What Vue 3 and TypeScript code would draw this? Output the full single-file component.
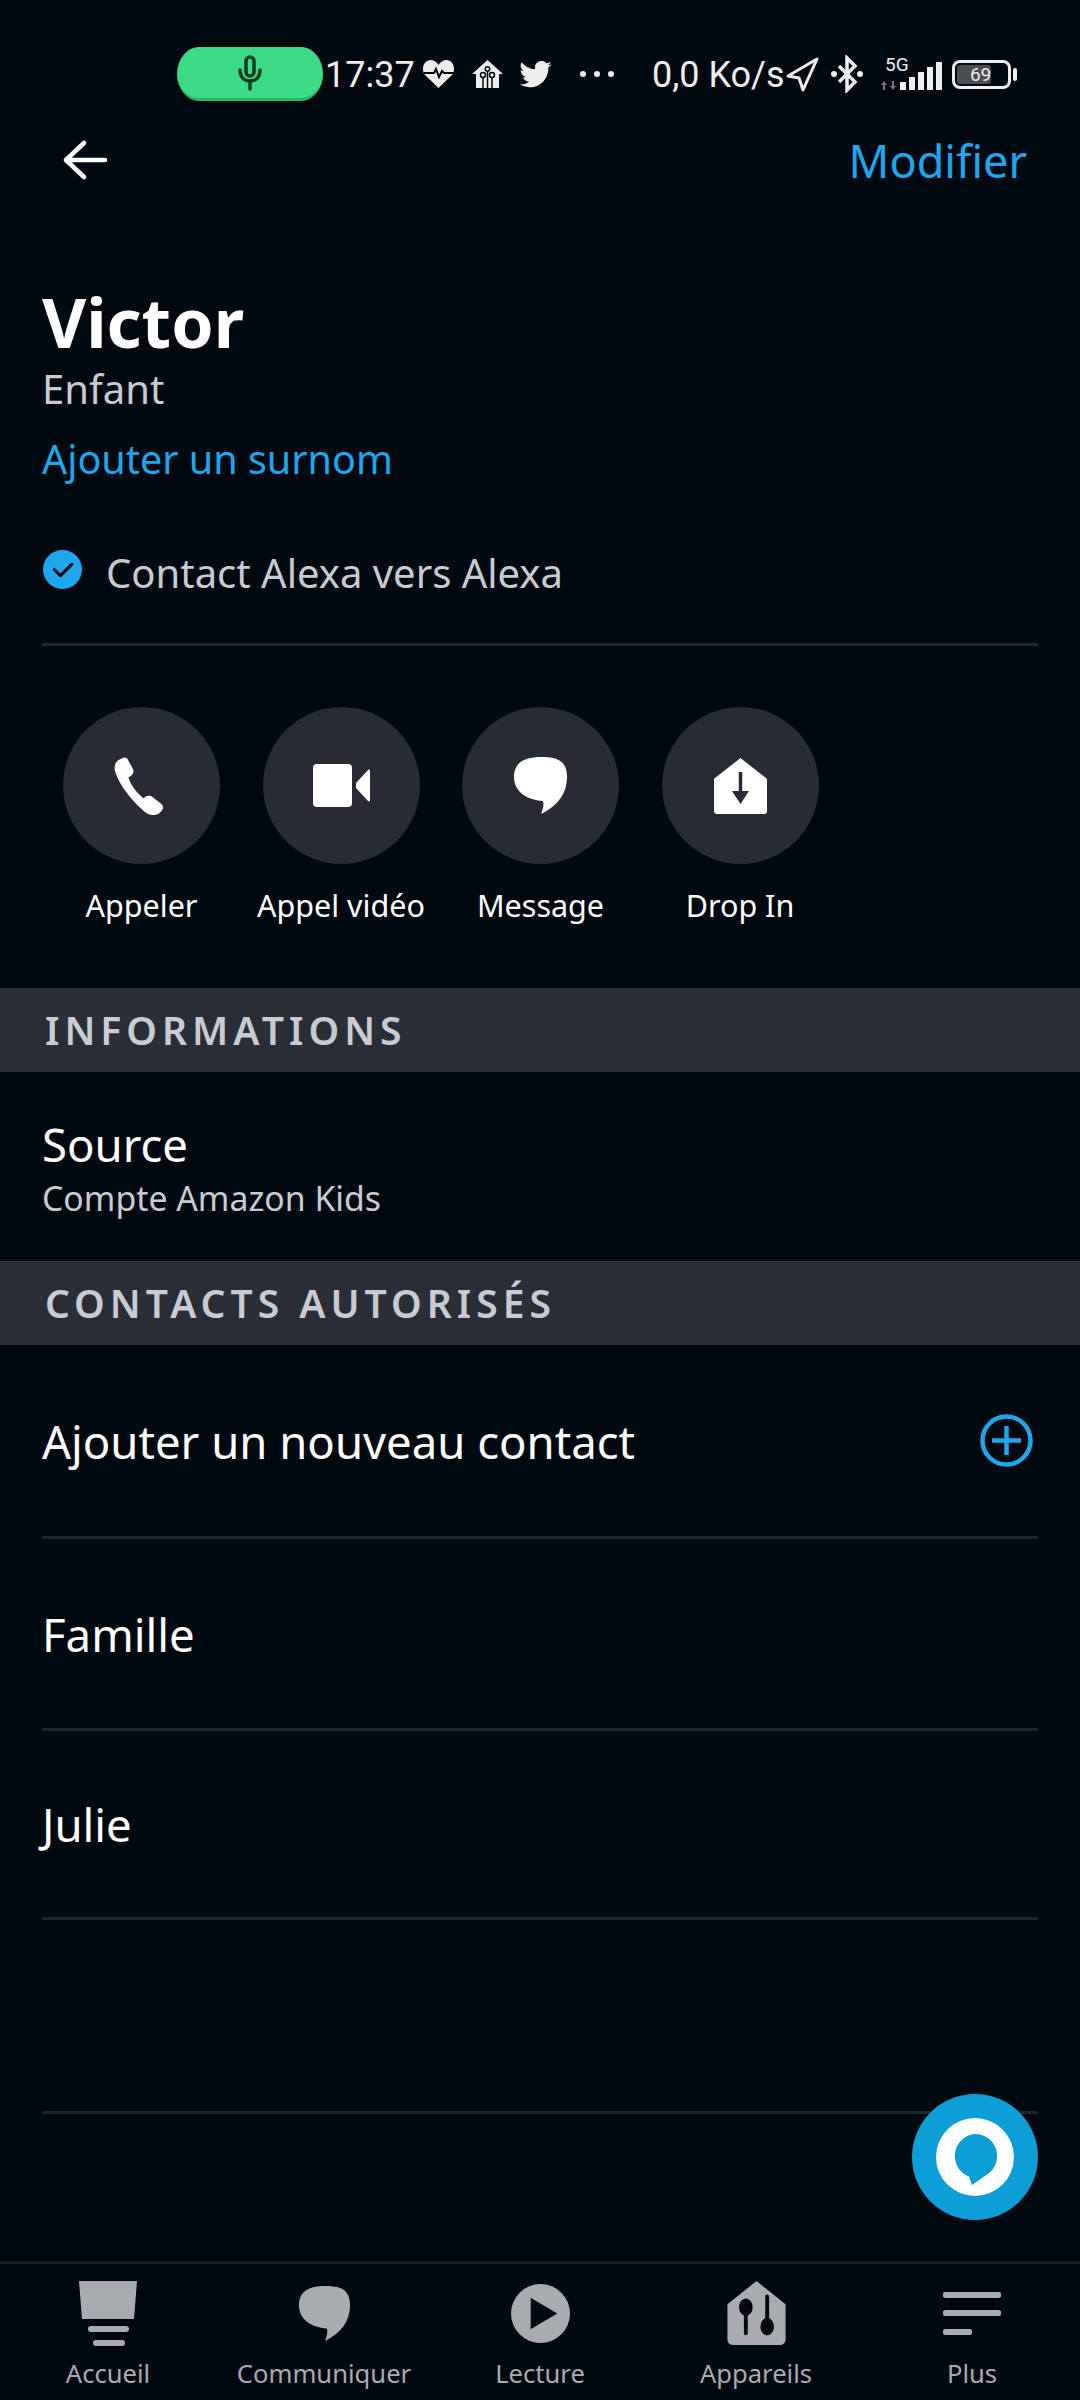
<script setup lang="ts">
const actions = [
  { id: "call", label: "Appeler" },
  { id: "video", label: "Appel vidéo" },
  { id: "msg", label: "Message" },
  { id: "drop", label: "Drop In" }
]
const tabs = ["Accueil", "Communiquer", "Lecture", "Appareils", "Plus"]
</script>

<template>
  <div class="screen">
    <div class="status">
      <div class="pill">
        <svg width="26" height="36" viewBox="0 0 26 36" fill="none" stroke="#0c3a22" stroke-width="3.5" stroke-linecap="round">
          <rect x="9" y="2" width="8" height="19" rx="4" />
          <path d="M3 15c0 7 4 11 10 11s10-4 10-11M13 26v8" />
        </svg>
      </div>
      <span class="time">17:37</span>
      <svg class="si heart" width="33" height="30" viewBox="0 0 33 30">
        <path d="M16.500 29 3 16C-1 11 1 2 8 1c4 0 7 2 8.500 5C18 3 21 1 25 1c7 1 9 10 5 15Z" fill="#eee" />
        <path d="M2 14h10l2-4 3 8 3-6 2 2h10" fill="none" stroke="#010910" stroke-width="2" />
      </svg>
      <svg class="si home" width="31" height="28" viewBox="0 0 31 28">
        <path d="M15.500 0 31 14h-4v14H4V14H0Z" fill="#eee" />
        <circle cx="11" cy="15" r="2.500" fill="none" stroke="#010910" stroke-width="1.500" />
        <circle cx="20" cy="15" r="2.500" fill="none" stroke="#010910" stroke-width="1.500" />
        <circle cx="15.500" cy="9" r="2.200" fill="none" stroke="#010910" stroke-width="1.500" />
        <path d="M11 18v10M20 18v10M15.500 11v17" stroke="#010910" stroke-width="1.500" />
      </svg>
      <svg class="si bird" width="33" height="27" viewBox="0 0 24 20">
        <path d="M24 2.400a10 10 0 0 1-2.800.8A5 5 0 0 0 23.300.5a10 10 0 0 1-3.100 1.200 4.900 4.900 0 0 0-8.400 4.500A14 14 0 0 1 1.700.9a4.900 4.900 0 0 0 1.500 6.600 5 5 0 0 1-2.200-.6c0 2.400 1.700 4.400 3.900 4.900a5 5 0 0 1-2.200.1 4.900 4.900 0 0 0 4.600 3.400A9.900 9.900 0 0 1 0 17.300 14 14 0 0 0 7.500 19.500c9.100 0 14.300-7.700 14-14.600A10 10 0 0 0 24 2.400Z" fill="#eee" />
      </svg>
      <span class="dots"><i></i><i></i><i></i></span>
      <span class="speed">0,0 Ko/s</span>
      <svg class="si nav" width="33" height="35" viewBox="0 0 33 35" fill="none" stroke="#eee" stroke-width="3" stroke-linejoin="round">
        <path d="M31 2 2 19l11 2 4 12Z" />
      </svg>
      <svg class="si bt" width="34" height="38" viewBox="0 0 34 38" fill="none" stroke="#eee" stroke-width="3.500">
        <path d="m9 11 16 16-8 8V3l8 8L9 27" />
        <circle cx="4" cy="19" r="3" fill="#eee" stroke="none" /><circle cx="30" cy="19" r="3" fill="#eee" stroke="none" />
      </svg>
      <div class="signal">
        <span class="fiveg">5G</span>
        <span class="data">
          <svg width="15" height="9" viewBox="0 0 15 9" fill="#777"><path d="M0 4 3 0l3 4H4v5H2V4ZM9 5h2V0h2v5h2l-3 4Z" /></svg>
        </span>
        <span class="bars"><i style="height: 8px"></i><i style="height: 13px"></i><i style="height: 18px"></i><i style="height: 23px"></i><i style="height: 28px"></i></span>
      </div>
      <div class="battery"><span class="cell"><span class="level">69</span></span><i class="nub"></i></div>
    </div>

    <div class="topbar">
      <svg width="46" height="40" viewBox="0 0 46 40" fill="none" stroke="#fff" stroke-width="4.500" stroke-linecap="round" stroke-linejoin="round">
        <path d="M22 3 4 20l18 17M4 20h39" />
      </svg>
      <span class="edit">Modifier</span>
    </div>

    <div class="profile">
      <h1>Victor</h1>
      <div class="role">Enfant</div>
      <div class="nick">Ajouter un surnom</div>
      <div class="verified">
        <svg width="39" height="39" viewBox="0 0 38 38">
          <circle cx="19" cy="19" r="19" fill="#1ea7ec" />
          <path d="m11 19 6 6 11-11" fill="none" stroke="#010910" stroke-width="3" stroke-linecap="round" stroke-linejoin="round" />
        </svg>
        <span>Contact Alexa vers Alexa</span>
      </div>
    </div>
    <div class="rule top-rule"></div>

    <div class="actions">
      <div v-for="a in actions" :key="a.id" class="action">
        <div class="circle">
          <svg v-if="a.id === 'call'" width="59" height="58" viewBox="0 0 60 62">
            <path d="M10 1c3-1 5 0 6 3l5 9c1 3 0 5-2 7l-3 2c2 7 9 17 16 22l3-2c2-1 5-1 7 1l9 7c2 2 3 4 1 7l-3 3c-3 2-8 3-12 1C24 52 7 32 2 16 0 11 2 5 6 3Z" fill="#fff" />
          </svg>
          <svg v-else-if="a.id === 'video'" width="57" height="43" viewBox="0 0 57 43">
            <rect x="0" y="0" width="39" height="43" rx="4" fill="#fff" />
            <path d="M43 19 55 6c1-1 2 0 2 1v29c0 1-1 2-2 1L43 24Z" fill="#fff" />
          </svg>
          <svg v-else-if="a.id === 'msg'" width="53" height="57" viewBox="0 0 53 57">
            <path d="M27 0C44 0 53 4 53 20 53 36 44 49 27 57 29 52 30 48 29 44 12 43 0 34 0 20 0 6 10 0 27 0Z" fill="#fff" />
          </svg>
          <svg v-else width="53" height="56" viewBox="0 0 53 56">
            <path d="M26.500 0 52 20c1 1 1 1 1 2v31c0 2-1 3-3 3H3c-2 0-3-1-3-3V22c0-1 0-1 1-2Z" fill="#fff" />
            <path d="M26.500 14v26" stroke="#272b33" stroke-width="3.500" />
            <path d="m18 33 8.500 13L35 33Z" fill="#272b33" />
          </svg>
        </div>
        <span class="action-label">{{ a.label }}</span>
      </div>
    </div>

    <div class="band">INFORMATIONS</div>
    <div class="source">
      <div class="row-title">Source</div>
      <div class="row-sub">Compte Amazon Kids</div>
    </div>
    <div class="band">CONTACTS AUTORISÉS</div>

    <div class="row add">
      <span class="row-title">Ajouter un nouveau contact</span>
      <svg width="53" height="53" viewBox="0 0 53 53" fill="none" stroke="#1ea7ec" stroke-width="4.500">
        <circle cx="26.500" cy="26.500" r="24" /><path d="M26.500 12v29M12 26.500h29" />
      </svg>
    </div>
    <div class="rule"></div>
    <div class="row family"><span class="row-title">Famille</span></div>
    <div class="rule"></div>
    <div class="row julie"><span class="row-title">Julie</span></div>
    <div class="rule"></div>
    <div class="row empty"></div>
    <div class="rule"></div>

    <div class="fab">
      <svg width="78" height="78" viewBox="0 0 78 78">
        <path fill-rule="evenodd" d="M39 0a39 39 0 1 1 0 78 39 39 0 0 1 0-78Zm0 16a22 22 0 0 1 12 40.500L36 67l-3-8.500A22 22 0 0 1 39 16Z" fill="#fff" />
      </svg>
    </div>

    <nav class="tabs">
      <div v-for="t in tabs" :key="t" class="tab">
        <div class="tab-icon">
          <svg v-if="t === 'Accueil'" width="58" height="65" viewBox="0 0 58 65" fill="#a8abb0">
            <path d="M0 0h58l-3 38H3Z" /><rect x="9" y="45" width="41" height="6" rx="3" /><rect x="14" y="59" width="32" height="6" rx="3" />
          </svg>
          <svg v-else-if="t === 'Communiquer'" width="53" height="55" viewBox="0 0 53 57" fill="#a8abb0">
            <path d="M27 0C44 0 53 4 53 20 53 36 44 49 27 57 29 52 30 48 29 44 12 43 0 34 0 20 0 6 10 0 27 0Z" />
          </svg>
          <svg v-else-if="t === 'Lecture'" width="59" height="59" viewBox="0 0 60 60">
            <circle cx="30" cy="30" r="30" fill="#a8abb0" /><path d="M20 14 47 30 20 46Z" fill="#010910" />
          </svg>
          <svg v-else-if="t === 'Appareils'" width="59" height="64" viewBox="0 0 60 66">
            <path d="M30 0 60 24v36c0 3-2 6-6 6H6c-4 0-6-3-6-6V24Z" fill="#a8abb0" />
            <path d="M19 22v32M41 16v38" stroke="#010910" stroke-width="4" stroke-linecap="round" />
            <ellipse cx="19" cy="27" rx="7" ry="9" fill="#010910" /><ellipse cx="41" cy="47" rx="7" ry="9" fill="#010910" />
          </svg>
          <svg v-else width="58" height="43" viewBox="0 0 58 43" fill="#a8abb0">
            <rect width="58" height="6" rx="2" /><rect y="18" width="58" height="6" rx="2" /><rect y="37" width="29" height="6" rx="2" />
          </svg>
        </div>
        <span class="tab-label">{{ t }}</span>
      </div>
    </nav>
  </div>
</template>

<style>
body {
  background: #010910;
}
</style>

<style scoped>
.screen {
  position: relative;
  width: 1080px;
  height: 2400px;
  overflow: hidden;
  background: #010910;
  color: #fff;
  font-family: "Noto Sans", sans-serif;
}

.status {
  height: 54px;
  padding: 47px 0 0 177px;
  display: flex;
  align-items: center;
  color: #eee;
}

.pill {
  width: 146px;
  height: 54px;
  box-sizing: border-box;
  border-radius: 22px / 27px;
  border-bottom: 3px solid #2bb56b;
  background: #3bdb86;
  display: flex;
  align-items: center;
  justify-content: center;
}

.time {
  margin: 2px 0 0 2px;
  width: 97px;
  font: 36px Roboto, sans-serif;
  white-space: nowrap;
}

.si {
  flex: none;
}

.heart { margin-left: 0; }
.home { margin-left: 17px; }
.bird { margin-left: 16px; }

.dots {
  margin-left: 28px;
  width: 34px;
  display: flex;
  justify-content: space-between;
}

.dots i {
  width: 6px;
  height: 6px;
  border-radius: 50%;
  background: #eee;
}

.speed {
  margin: 2px 0 0 38px;
  width: 132px;
  font: 36px Roboto, sans-serif;
  white-space: nowrap;
}

.nav { margin-left: 2px; }
.bt { margin-left: 11px; }

.signal {
  position: relative;
  margin-left: 17px;
  width: 61px;
  height: 34px;
  margin-top: -2px;
}

.fiveg {
  position: absolute;
  left: 4px;
  top: -3px;
  font: 19px Roboto, sans-serif;
}

.data {
  position: absolute;
  left: 0;
  bottom: 0;
  display: flex;
}

.bars {
  position: absolute;
  right: 0;
  bottom: 0;
  display: flex;
  align-items: flex-end;
  gap: 3px;
}

.bars i {
  width: 6px;
  background: #eee;
}

.battery {
  margin-left: 10px;
  display: flex;
  align-items: center;
  gap: 2px;
}

.cell {
  width: 59px;
  height: 29px;
  box-sizing: border-box;
  border: 3px solid #eee;
  border-radius: 8px;
  padding: 2px;
  display: flex;
}

.level {
  width: 70%;
  background: #4a4d52;
  border-radius: 3px;
  color: #eee;
  font: 19px/19px Roboto, sans-serif;
  text-align: right;
  white-space: nowrap;
}

.nub {
  width: 4px;
  height: 13px;
  border-radius: 2px;
  background: #eee;
}

.topbar {
  margin-top: 31px;
  height: 56px;
  padding: 0 53px 0 62px;
  display: flex;
  align-items: center;
  justify-content: space-between;
}

.edit {
  font-size: 45px;
  color: #1ea7ec;
}

.profile {
  margin-top: 93px;
  padding: 0 42px;
}

h1 {
  margin: 0;
  font-size: 68px;
  font-weight: 700;
  line-height: 82px;
}

.role {
  font-size: 40px;
  line-height: 52px;
  color: #c8ccd2;
}

.nick {
  margin-top: 18px;
  font-size: 39.5px;
  line-height: 52px;
  color: #1ea7ec;
}

.verified {
  margin-top: 61px;
  height: 52px;
  display: flex;
  align-items: center;
  gap: 24px;
  font-size: 40px;
  color: #c8ccd2;
}

.verified svg {
  margin: -6px 0 0 1px;
}

.rule {
  height: 3px;
  margin: 0 42px;
  background: #22272e;
}

.top-rule {
  margin-top: 45px;
}

.actions {
  margin-top: 61px;
  padding-left: 63px;
  display: flex;
  gap: 42.5px;
  height: 281px;
}

.action {
  position: relative;
  width: 157px;
  display: flex;
  flex-direction: column;
  align-items: center;
}

.circle {
  width: 157px;
  height: 157px;
  flex: none;
  border-radius: 50%;
  background: #272b33;
  display: flex;
  align-items: center;
  justify-content: center;
}

.action-label {
  margin-top: 19px;
  font-size: 30.5px;
  line-height: 44px;
  white-space: nowrap;
}

.band {
  height: 84px;
  padding: 0 0 2px 45px;
  box-sizing: border-box;
  background: #2a2e37;
  display: flex;
  align-items: center;
  font-size: 39px;
  font-weight: 600;
  letter-spacing: 5px;
  color: #c8ccd2;
}

.source {
  height: 189px;
  padding: 43px 42px 0;
  box-sizing: border-box;
}

.row-title {
  font-size: 45.5px;
  line-height: 58px;
}

.row-sub {
  font-size: 33.8px;
  line-height: 50px;
  color: #c8ccd2;
}

.row {
  padding: 0 42px;
  display: flex;
  align-items: center;
  justify-content: space-between;
  box-sizing: border-box;
}

.add {
  height: 191px;
  padding-right: 47px;
}

.family {
  height: 189px;
}

.julie {
  height: 186px;
}

.empty {
  height: 191px;
}

.fab {
  position: absolute;
  left: 912px;
  top: 2094px;
  width: 126px;
  height: 126px;
  border-radius: 50%;
  background: #0c9fd6;
  display: flex;
  align-items: center;
  justify-content: center;
}

.tabs {
  position: absolute;
  left: 0;
  right: 0;
  bottom: 0;
  height: 136px;
  border-top: 3px solid #1b2026;
  display: grid;
  grid-template-columns: repeat(5, 216px);
}

.tab {
  display: flex;
  flex-direction: column;
  align-items: center;
}

.tab-icon {
  height: 86px;
  margin-top: 6px;
  flex: none;
  display: flex;
  align-items: center;
  justify-content: center;
}

.tab-label {
  margin-top: 1px;
  font-size: 25.6px;
  line-height: 34px;
  color: #a8abb0;
  white-space: nowrap;
}
</style>
